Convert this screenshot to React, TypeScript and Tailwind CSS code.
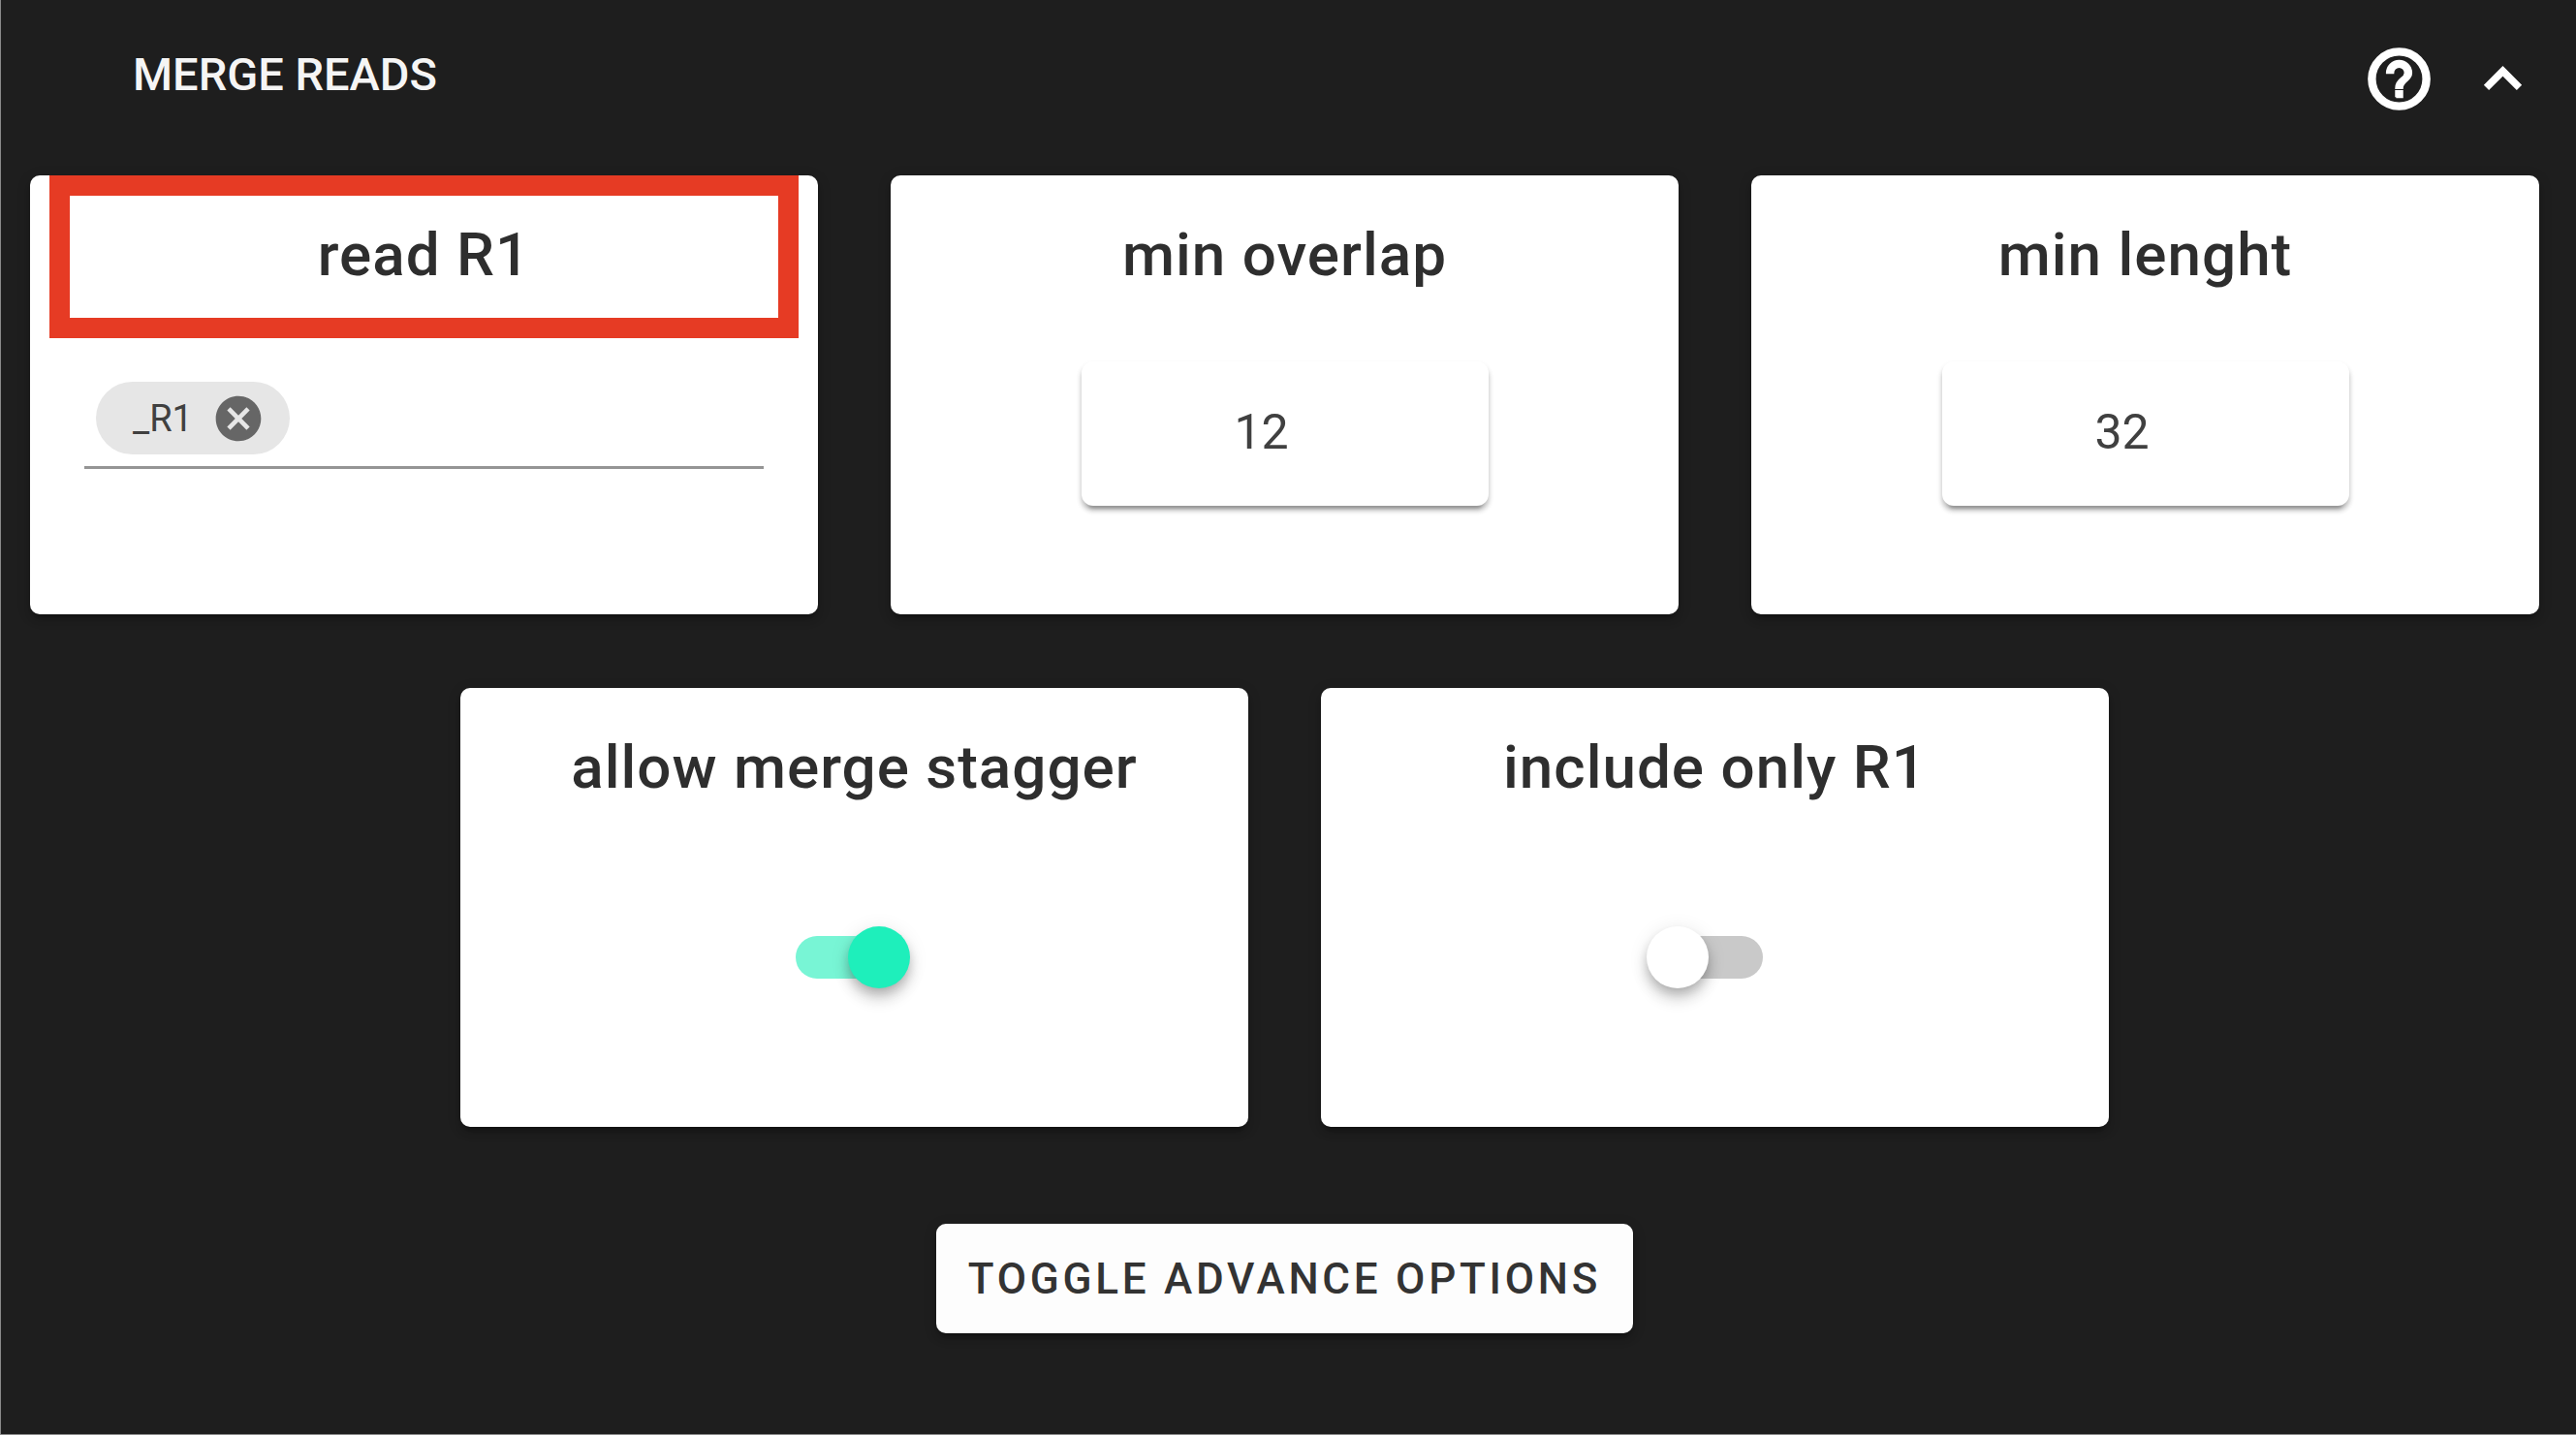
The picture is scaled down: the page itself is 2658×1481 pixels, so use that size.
import { useState, type ReactNode } from "react";

const CARD_SHADOW =
  "shadow-[0_9px_3px_-6px_rgba(0,0,0,0.2),0_6px_6px_0_rgba(0,0,0,0.14),0_3px_15px_0_rgba(0,0,0,0.12)]";

function HelpIcon() {
  return (
    <svg viewBox="0 0 24 24" className="size-[75px]" fill="currentColor" stroke="currentColor" strokeWidth="0.7" aria-hidden="true">
      <path d="M11,18H13V16H11V18M12,2A10,10 0 0,0 2,12A10,10 0 0,0 12,22A10,10 0 0,0 22,12A10,10 0 0,0 12,2M12,20C7.59,20 4,16.41 4,12C4,7.59 7.59,4 12,4C16.41,4 20,7.59 20,12C20,16.41 16.41,20 12,20M12,6A4,4 0 0,0 8,10H10A2,2 0 0,1 12,8A2,2 0 0,1 14,10C14,12 11,11.75 11,15H13C13,12.75 16,12.5 16,10A4,4 0 0,0 12,6Z" />
    </svg>
  );
}

function ChevronUpIcon() {
  return (
    <svg viewBox="0 0 24 24" className="size-[75px]" fill="currentColor" stroke="currentColor" strokeWidth="0.4" aria-hidden="true">
      <path d="M7.41,15.41L12,10.83L16.59,15.41L18,14L12,8L6,14L7.41,15.41Z" />
    </svg>
  );
}

function CloseCircleIcon() {
  return (
    <svg viewBox="0 0 24 24" className="size-14" fill="currentColor" aria-hidden="true">
      <path d="M12,2C17.53,2 22,6.47 22,12C22,17.53 17.53,22 12,22C6.47,22 2,17.53 2,12C2,6.47 6.47,2 12,2M15.59,7L12,10.59L8.41,7L7,8.41L10.59,12L7,15.59L8.41,17L12,13.41L15.59,17L17,15.59L13.41,12L17,8.41L15.59,7Z" />
    </svg>
  );
}

type CardProps = {
  title: string;
  htmlFor: string;
  highlighted?: boolean;
  className?: string;
  children: ReactNode;
};

function Card({ title, htmlFor, highlighted = false, className = "", children }: CardProps) {
  return (
    <section className={`col-span-2 flex min-h-[453px] flex-col rounded-[10px] bg-white px-5 ${CARD_SHADOW} ${className}`}>
      <h2
        className={`flex h-[168px] items-center justify-center border-[21px] pb-1 text-[62px] leading-none font-medium tracking-[1px] text-[#2e2e2e] ${
          highlighted ? "border-[#e63b24]" : "border-transparent"
        }`}
      >
        <label htmlFor={htmlFor}>{title}</label>
      </h2>
      {children}
    </section>
  );
}

function NumberField({ id, initial }: { id: string; initial: number }) {
  const [value, setValue] = useState(String(initial));
  return (
    <div className="mt-6 flex justify-center">
      <input
        id={id}
        type="number"
        value={value}
        onChange={(e) => setValue(e.target.value)}
        className="h-[149px] w-[420px] appearance-none rounded-xl bg-white pr-[84px] pb-1 pl-9 text-center text-[50px] text-[#404040] shadow-[0_9px_3px_-6px_rgba(0,0,0,0.2),0_5px_5px_0_rgba(0,0,0,0.18),0_4px_6px_0_rgba(0,0,0,0.12)] outline-none [-moz-appearance:textfield] [&::-webkit-inner-spin-button]:appearance-none [&::-webkit-outer-spin-button]:appearance-none"
      />
    </div>
  );
}

function Switch({ id, initial }: { id: string; initial: boolean }) {
  const [on, setOn] = useState(initial);
  return (
    <div className="mt-[78px] flex justify-center">
      <span className="relative mr-[22px] flex h-16 w-[120px] items-center justify-end">
        <input
          id={id}
          type="checkbox"
          role="switch"
          checked={on}
          onChange={(e) => setOn(e.target.checked)}
          className="peer h-11 w-[110px] cursor-pointer appearance-none rounded-full bg-[#c9c9c9] outline-none checked:bg-[#78f5d5]"
        />
        <span className="pointer-events-none absolute top-0 left-0 size-16 rounded-full bg-white shadow-[0_6px_12px_-3px_rgba(0,0,0,0.2),0_12px_15px_0_rgba(0,0,0,0.14),0_3px_20px_0_rgba(0,0,0,0.1)] peer-checked:translate-x-16 peer-checked:bg-[#1eefbb]" />
      </span>
    </div>
  );
}

function ChipField({ id }: { id: string }) {
  const [chips, setChips] = useState(["_R1"]);
  const [draft, setDraft] = useState("");
  return (
    <div className="mx-9 mt-[45px] flex items-center border-b-[3px] border-[#959595] px-3 pb-3">
      {chips.map((chip) => (
        <span key={chip} className="flex h-[75px] w-[200px] shrink-0 items-center justify-between rounded-full bg-[#e6e6e6] pr-[25px] pl-[38px] text-[38px] leading-none text-[#404040]">
          {chip}
          <button
            type="button"
            aria-label={`Remove ${chip}`}
            onClick={() => setChips(chips.filter((c) => c !== chip))}
            className="text-[#666666]"
          >
            <CloseCircleIcon />
          </button>
        </span>
      ))}
      <input
        id={id}
        type="text"
        value={draft}
        onChange={(e) => setDraft(e.target.value)}
        onKeyDown={(e) => {
          if (e.key === "Enter" && draft && !chips.includes(draft)) {
            setChips([...chips, draft]);
            setDraft("");
          }
        }}
        className="ml-3 h-[75px] min-w-0 flex-1 bg-transparent text-[38px] outline-none"
      />
    </div>
  );
}

export default function App() {
  return (
    <main className="min-h-screen border-b border-l border-[#8a8a8a] bg-[#1e1e1e] pr-[38px] pl-[30px] font-[Roboto,sans-serif]">
      <header className="flex h-[181px] items-start justify-between pl-[106px]">
        <h1 className="mt-[49px] text-[47px] leading-[56px] font-medium text-[#f5f5f5]">MERGE READS</h1>
        <div className="mt-11 flex gap-8 text-white">
          <button type="button" aria-label="Help">
            <HelpIcon />
          </button>
          <button type="button" aria-label="Collapse">
            <ChevronUpIcon />
          </button>
        </div>
      </header>

      <div className="grid grid-cols-6 gap-x-[75px] gap-y-[76px]">
        <Card title="read R1" htmlFor="read-r1" highlighted>
          <ChipField id="read-r1" />
        </Card>
        <Card title="min overlap" htmlFor="min-overlap">
          <NumberField id="min-overlap" initial={12} />
        </Card>
        <Card title="min lenght" htmlFor="min-lenght">
          <NumberField id="min-lenght" initial={32} />
        </Card>
        <Card title="allow merge stagger" htmlFor="allow-merge-stagger" className="col-start-2">
          <Switch id="allow-merge-stagger" initial={true} />
        </Card>
        <Card title="include only R1" htmlFor="include-only-r1">
          <Switch id="include-only-r1" initial={false} />
        </Card>
      </div>

      <div className="flex justify-center pt-[100px]">
        <button
          type="button"
          className={`h-[113px] rounded-[10px] bg-[#fdfdfd] px-[33px] text-[44px] leading-none font-medium tracking-[0.085em] text-[#333333] ${CARD_SHADOW}`}
        >
          TOGGLE ADVANCE OPTIONS
        </button>
      </div>
    </main>
  );
}
